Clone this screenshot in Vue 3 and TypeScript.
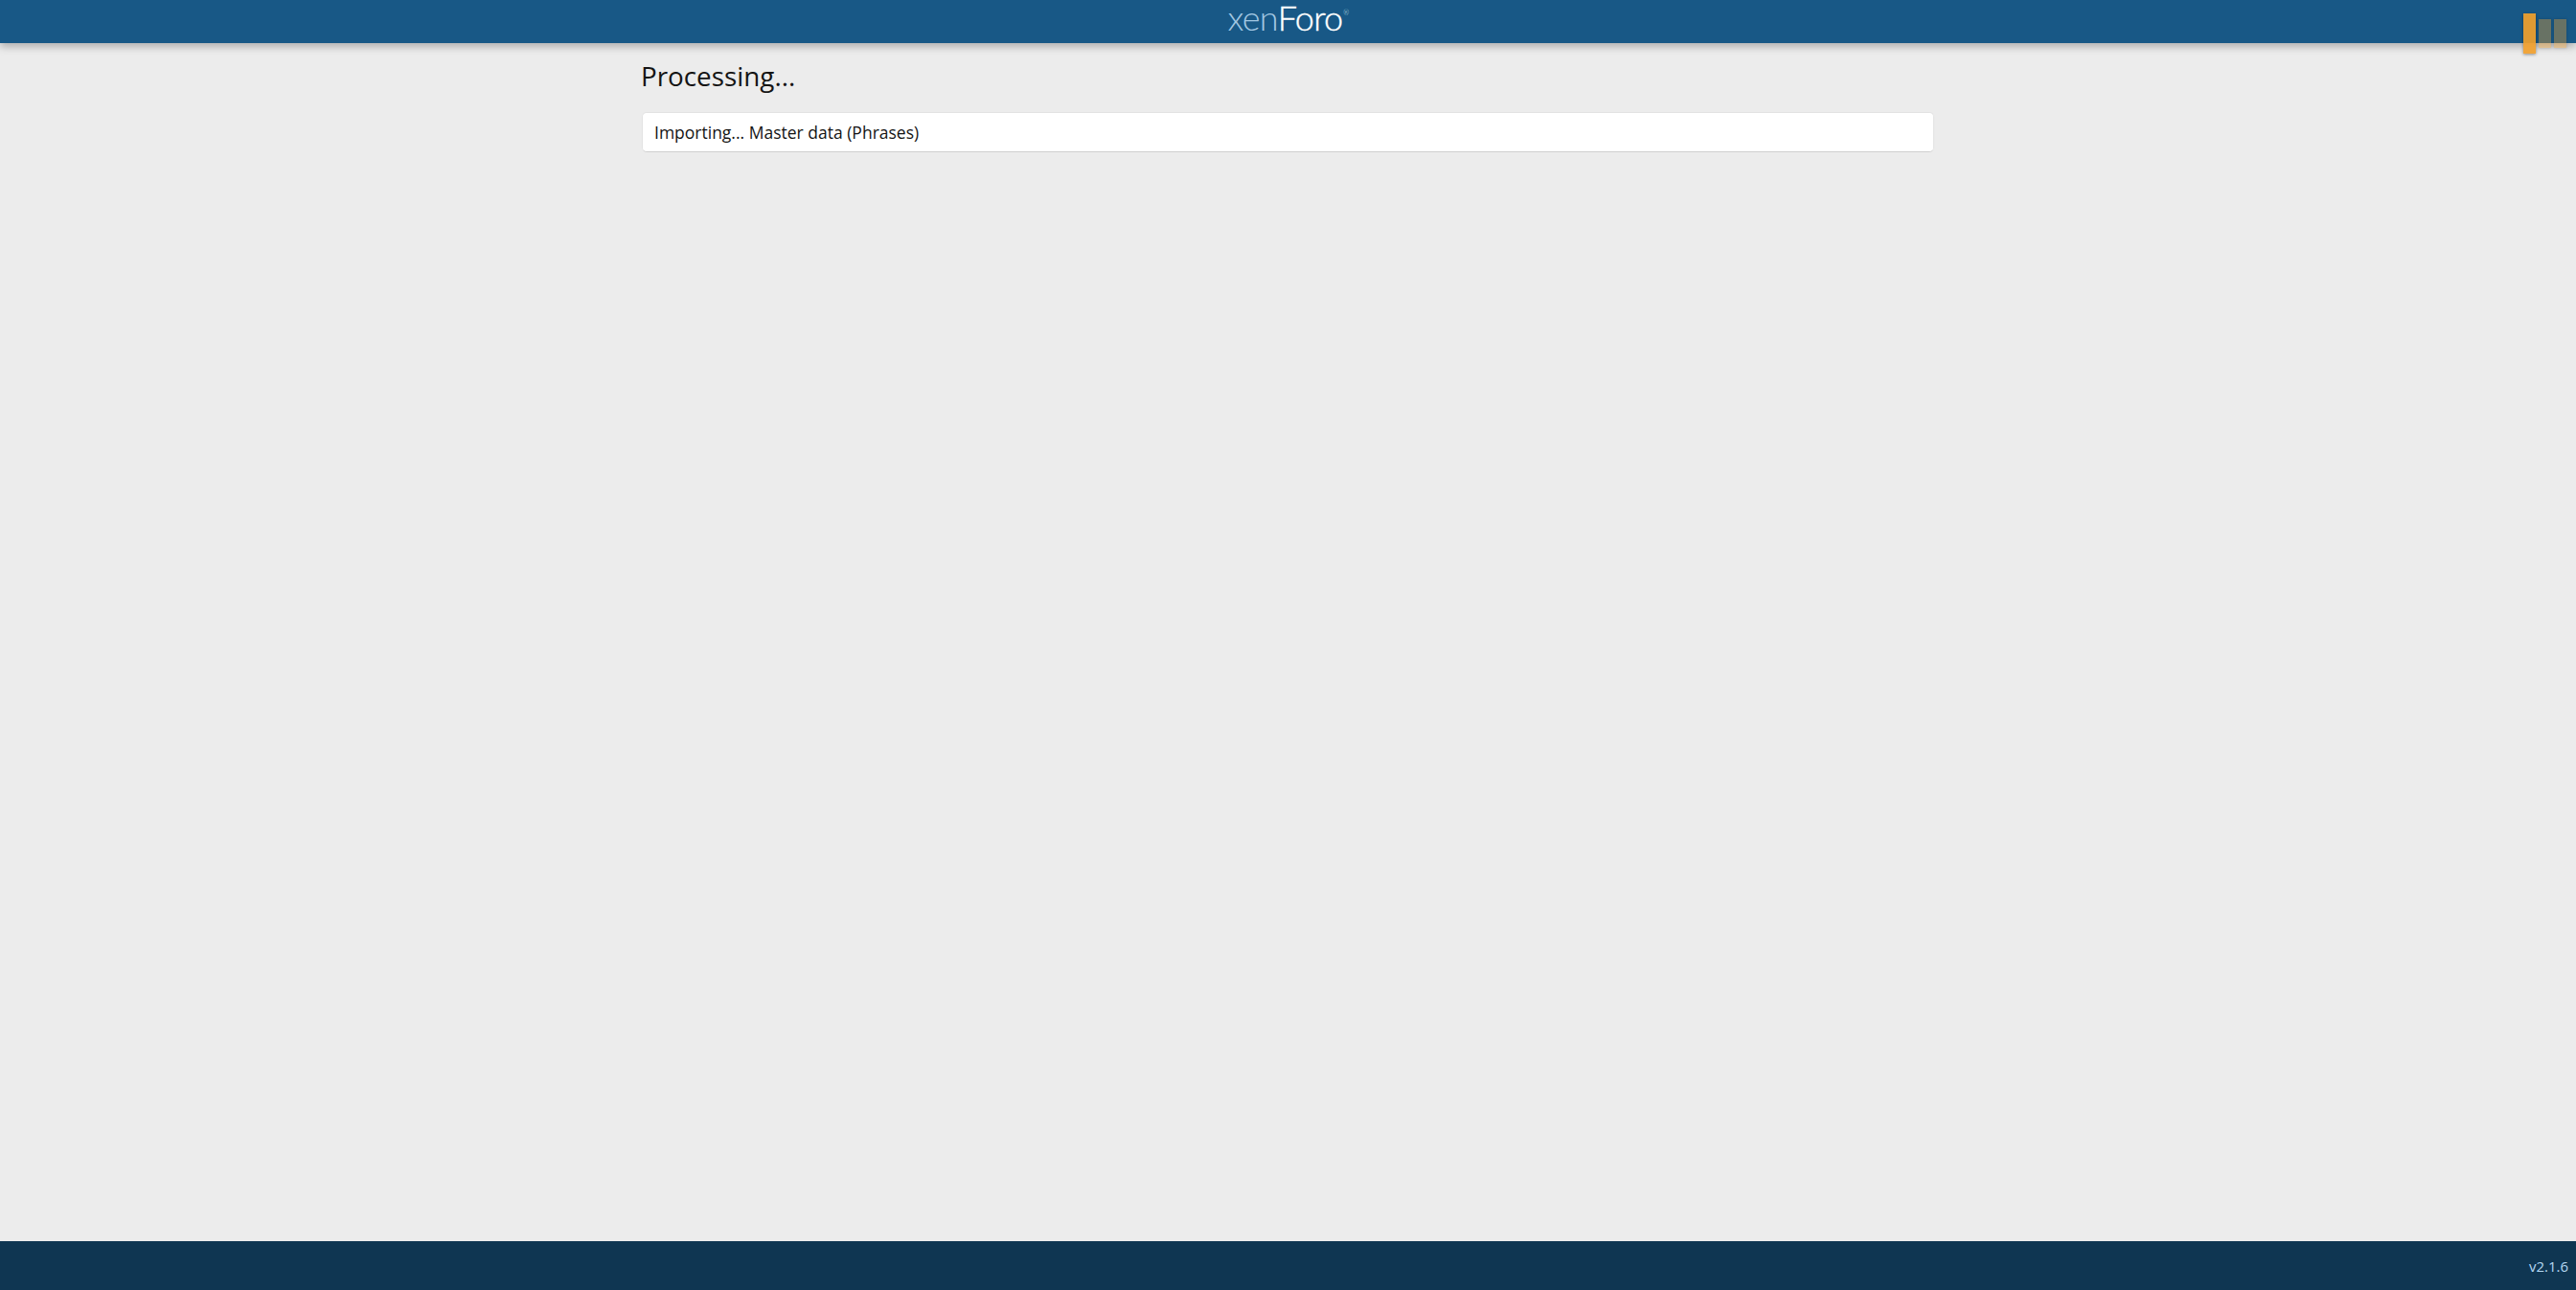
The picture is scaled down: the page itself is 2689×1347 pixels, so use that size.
<template>
  <div class="page">
    <header class="page-header">
      <div class="logo"><span class="logo-xen">xen</span><span class="logo-foro">Foro</span><span class="logo-reg">®</span></div>
    </header>

    <!-- loading indicator, sits over the header edge -->
    <div class="loader">
      <span class="loader-bar loader-bar--active"></span>
      <span class="loader-bar"></span>
      <span class="loader-bar"></span>
    </div>

    <main class="page-body">
      <h1 class="page-title">{{ title }}</h1>
      <div class="block">{{ status }}</div>
    </main>

    <footer class="page-footer">{{ version }}</footer>
  </div>
</template>

<script setup lang="ts">
const title = 'Processing...'
const status = 'Importing... Master data (Phrases)'
const version = 'v2.1.6'
</script>

<style>
html,
body {
  margin: 0;
  background: #ececec;
}
</style>

<style scoped>
.page {
  display: flex;
  flex-direction: column;
  height: 1347px;
  overflow: hidden;
  position: relative;
  font-family: "Open Sans", "Noto Sans", sans-serif;
  background: #ececec;
}

.page-header {
  flex-shrink: 0;
  display: flex;
  justify-content: center;
  align-items: flex-start;
  height: 45px;
  background: #185886;
  box-shadow: 0 4px 8px rgba(0, 0, 0, 0.25);
  position: relative;
  z-index: 1;
}

.logo {
  display: flex;
  align-items: baseline;
  font-family: "Lato", sans-serif;
  font-size: 36px;
  line-height: 36px;
  font-weight: 300;
  letter-spacing: -0.8px;
  height: 36px;
}

.logo-xen {
  color: #a3c8e3;
}

.logo-foro {
  color: #ffffff;
  -webkit-text-stroke: 0.4px #ffffff;
}

.logo-reg {
  color: #cfe0ec;
  font-size: 7px;
  line-height: 7px;
  align-self: flex-start;
  margin-top: 10px;
  margin-left: 1px;
}

.loader {
  position: absolute;
  top: 14px;
  right: 10px;
  z-index: 2;
  display: flex;
  align-items: center;
  gap: 3px;
  height: 42px;
}

.loader-bar {
  width: 13px;
  height: 30px;
  background: rgba(241, 160, 44, 0.37);
  box-shadow: 0 0 3px rgba(0, 0, 0, 0.2);
}

.loader-bar--active {
  height: 42px;
  background: rgba(241, 160, 44, 0.92);
  box-shadow: 0 1px 3px rgba(0, 0, 0, 0.4);
}

.page-body {
  flex: 1;
  width: 1349px;
  margin: 0 auto;
}

.page-title {
  margin: 16px 0 0 -1px;
  font-size: 27.8px;
  line-height: 36px;
  font-weight: 400;
  color: #141414;
}

.block {
  margin-top: 20px;
  height: 42px;
  box-sizing: border-box;
  padding: 0 12px;
  display: flex;
  align-items: center;
  background: #ffffff;
  border: 1px solid #e3e3e3;
  border-bottom-color: #cfcfcf;
  border-radius: 5px;
  font-size: 17.5px;
  color: #141414;
}

.page-footer {
  flex-shrink: 0;
  height: 51px;
  box-sizing: border-box;
  padding-right: 8px;
  display: flex;
  justify-content: flex-end;
  align-items: center;
  background: #0f3652;
  color: #b4d8f2;
  font-size: 15px;
}
</style>
